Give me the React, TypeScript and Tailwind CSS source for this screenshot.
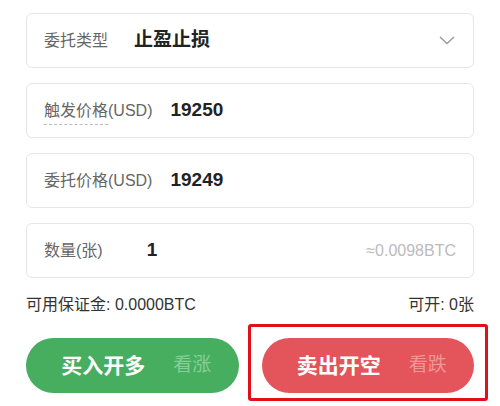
import React from "react";

const Field = ({
  label,
  value,
  gap,
  right,
}: {
  label: React.ReactNode;
  value: string;
  gap: string;
  right?: React.ReactNode;
}) => (
  <div className="flex h-[55px] items-center rounded-[6px] border border-[#e6e6e6] bg-white pl-[17px] pr-[17px]">
    <span className="text-[16px] text-[#666]">{label}</span>
    <span className={`${gap} text-[19px] font-bold text-[#222]`}>{value}</span>
    <div className="ml-auto">{right}</div>
  </div>
);

export default function App() {
  return (
    <div
      className="h-[406px] w-[500px] bg-white px-[26px] pt-[13px]"
      style={{ fontFamily: '"Liberation Sans", "Noto Sans CJK SC", sans-serif' }}
    >
      <div className="flex flex-col gap-[15px]">
        <Field
          label="委托类型"
          value="止盈止损"
          gap="ml-[26px]"
          right={
            <svg width="16" height="9" viewBox="0 0 16 9" fill="none" className="mr-[1px]">
              <path d="M1 1l7 6.5L15 1" stroke="#9a9a9a" strokeWidth="1.4" />
            </svg>
          }
        />
        <Field
          label={
            <>
              <span className="border-b border-dashed border-[#bbb] pb-[5px]">触发价格</span>(USD)
            </>
          }
          value="19250"
          gap="ml-[18px]"
        />
        <Field label="委托价格(USD)" value="19249" gap="ml-[18px]" />
        <Field
          label="数量(张)"
          value="1"
          gap="ml-[44px]"
          right={<span className="text-[16px] text-[#bbb]">≈0.0098BTC</span>}
        />
      </div>

      <div className="mt-[15px] flex items-center justify-between text-[16px] text-[#333]">
        <span>可用保证金: 0.0000BTC</span>
        <span>可开: 0张</span>
      </div>

      <div className="mt-[21px] grid grid-cols-2 gap-[23px]">
        <button className="flex h-[55px] items-center justify-center gap-[28px] rounded-full bg-[#47ad5f] pl-[8px]">
          <span className="text-[21px] font-bold text-white">买入开多</span>
          <span className="text-[19px] text-[#86cf97]">看涨</span>
        </button>
        <div className="relative">
          <button className="flex h-[55px] w-full items-center justify-center gap-[28px] rounded-full bg-[#e4545b] pl-[8px]">
            <span className="text-[21px] font-bold text-white">卖出开空</span>
            <span className="text-[19px] text-[#f29597]">看跌</span>
          </button>
          <div className="pointer-events-none absolute -bottom-[8px] -left-[14px] -right-[14px] -top-[14px] rounded-[3px] border-[3px] border-[#e01019]" />
        </div>
      </div>
    </div>
  );
}
